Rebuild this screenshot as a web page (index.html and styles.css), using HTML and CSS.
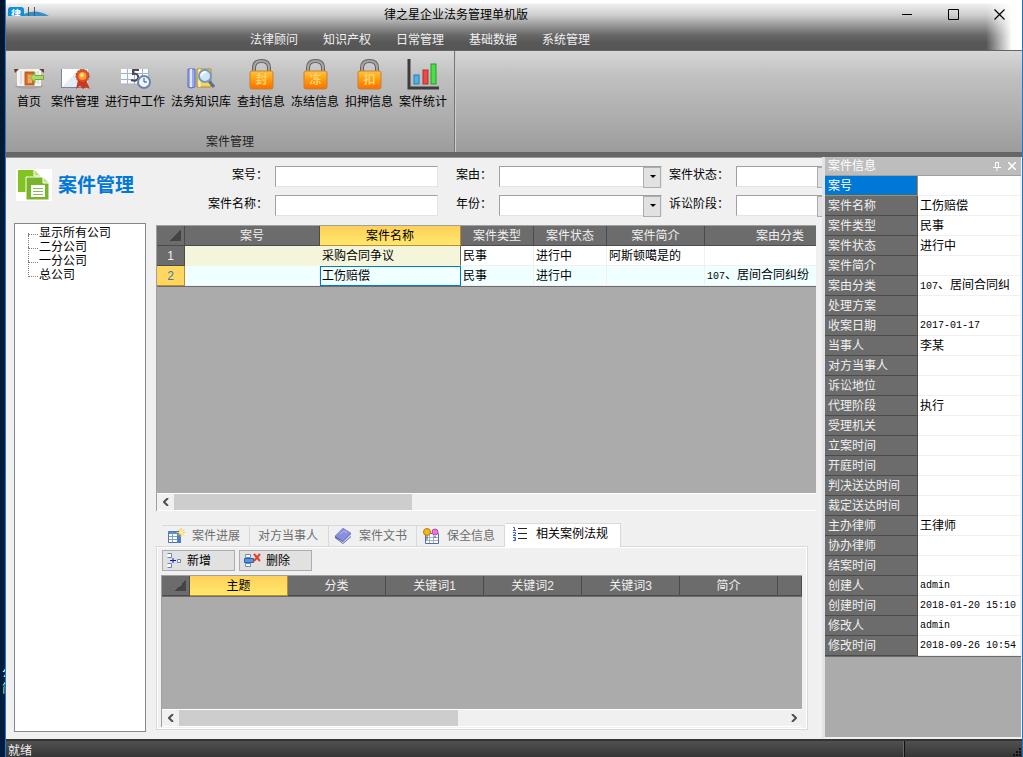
FILE: index.html
```
<!DOCTYPE html>
<html lang="zh-CN">
<head>
    <meta charset="UTF-8">
    <meta name="viewport" content="width=device-width, initial-scale=1.0">
    <title>律之星企业法务管理单机版</title>
    <link rel="stylesheet" href="styles.css">
</head>
<body>
    <div class="desktop">
        <span>公</span>
        <span class="green">简</span>
    </div>
    <div class="window">
        <header class="header">
            <div class="titlebar">
                <svg class="app-icon" width="42" height="9" viewBox="0 0 42 9">
                    <path d="M16 9V7Q28 1 41 9z" fill="#2f8fc8"/>
                    <path d="M20.500 0V9M26.500 0V9" stroke="#555"/>
                    <path d="M0 9V3Q0 0 3 0H13Q16 0 16 3V9z" fill="#0a8fe0"/>
                    <text x="3" y="11" font-size="10" font-weight="bold" fill="#fff">律</text>
                </svg>
                <h1 class="title">律之星企业法务管理单机版</h1>
                <div class="win-buttons">
                    <button type="button" aria-label="最小化"><svg width="11" height="11"><path d="M0 5.500H10" stroke="#000"/></svg></button>
                    <button type="button" aria-label="最大化"><svg width="11" height="11"><path d="M.5 .5H10.500V10.500H.5z" stroke="#000" fill="none"/></svg></button>
                    <button type="button" aria-label="关闭"><svg width="11" height="11"><path d="M.5 .5L10.500 10.500M10.500 .5L.5 10.500" stroke="#000" stroke-width="1.200"/></svg></button>
                </div>
            </div>
            <nav class="menu">
                <a href="#">法律顾问</a>
                <a href="#">知识产权</a>
                <a href="#">日常管理</a>
                <a href="#">基础数据</a>
                <a href="#">系统管理</a>
            </nav>
        </header>

        <section class="ribbon">
            <div class="ribbon-group">
                <div class="ribbon-items">
                    <button type="button" class="home">
                        <svg width="32" height="32" viewBox="0 0 32 32">
                            <ellipse cx="16" cy="28" rx="14" ry="3" fill="#999" opacity=".6"/>
                            <path d="M4 11H28V28H4z" fill="#f5f3f0"/>
                            <path d="M1 11H6L2 15zM26 11H31V15z" fill="#6b3a33"/>
                            <path d="M8 13V26M25 13V26" stroke="#ccc"/>
                            <path d="M12.500 14.500H20.500V26.500H12.500z" fill="#e87a3a" stroke="#c0601c" stroke-width="2"/>
                            <path d="M15 17H19V25H15z" fill="#f6a868"/>
                            <path d="M17 19.500L22 14.500V17.500H30.500V21.500H22V24.500z" fill="#a9dc67" stroke="#76a83a"/>
                        </svg>
                        <span>首页</span>
                    </button>
                    <button type="button">
                        <svg width="32" height="32" viewBox="0 0 32 32">
                            <path d="M2 11H29V29.500H2z" fill="#e4ebf5"/>
                            <path d="M2 29.500H29M2.500 11V29" stroke="#7387a3" fill="none"/>
                            <path d="M3 29V11H20z" fill="#fff"/>
                            <path d="M19 22L17 31L21 28L24 31V24zM27 22L31 31L27 29L24 31V24z" fill="#c93a20"/>
                            <circle cx="23.500" cy="18" r="6.500" fill="#dc4d2a" stroke="#b93218" stroke-dasharray="2 1"/>
                            <circle cx="23.500" cy="18" r="4" fill="#ff9a32"/>
                            <circle cx="23" cy="17" r="2" fill="#ffe27a"/>
                        </svg>
                        <span>案件管理</span>
                    </button>
                    <button type="button">
                        <svg width="32" height="32" viewBox="0 0 32 32">
                            <path d="M2 11H30V26H2z" fill="#fafcff"/>
                            <path d="M2 15.500H30M2 21.500H30M2 26H24M8.500 11V26M15.500 11V26M23.500 11V26M29.500 11V19" stroke="#a2b2c8"/>
                            <path d="M20 12H14V16Q20 15 19 20Q18 24 12 22" fill="none" stroke="#4a4a52" stroke-width="2"/>
                            <circle cx="25" cy="24" r="6" fill="#eef5fc" stroke="#6886a9" stroke-width="2"/>
                            <path d="M25 20V24H28" fill="none" stroke="#2b4a70"/>
                        </svg>
                        <span>进行中工作</span>
                    </button>
                    <button type="button">
                        <svg width="32" height="32" viewBox="0 0 32 32">
                            <path d="M3 11H10V29Q6 31 3 29z" fill="#98a9ef" stroke="#596dc2"/>
                            <path d="M6 11V29" stroke="#e2e8ff" stroke-width="2"/>
                            <path d="M12 11H26V29H12z" fill="#f4d266" stroke="#b28b25"/>
                            <path d="M14.500 11V29" stroke="#fff3ad" stroke-width="2"/>
                            <path d="M24 23L29 29" stroke="#59708f" stroke-width="3"/>
                            <circle cx="20" cy="18" r="6" fill="#cfe6f8" stroke="#7899bb" stroke-width="2"/>
                            <path d="M16 18Q17 14 21 14" fill="none" stroke="#fff" stroke-width="2"/>
                        </svg>
                        <span>法务知识库</span>
                    </button>
                    <button type="button">
                        <svg width="32" height="32" viewBox="0 0 32 32">
                            <defs>
                                <linearGradient id="orange" x1="0" y1="0" x2="0" y2="1">
                                    <stop offset="0" stop-color="#ffc43c"/>
                                    <stop offset=".5" stop-color="#ff9a0c"/>
                                    <stop offset="1" stop-color="#ff6d00"/>
                                </linearGradient>
                                <g id="lock">
                                    <path d="M9 13V10Q9 3 16.500 3T24 10V13" fill="none" stroke="#626262" stroke-width="4"/>
                                    <path d="M9 13V10Q9 3 16.500 3T24 10V13" fill="none" stroke="#a5a5a5" stroke-width="2"/>
                                    <rect x="5" y="13" width="23" height="18" rx="2" fill="url(#orange)" stroke="#c58137"/>
                                </g>
                            </defs>
                            <use href="#lock"/>
                            <text class="lock-text" x="16.500" y="26" text-anchor="middle">封</text>
                        </svg>
                        <span>查封信息</span>
                    </button>
                    <button type="button">
                        <svg width="32" height="32" viewBox="0 0 32 32">
                            <use href="#lock"/>
                            <text class="lock-text" x="16.500" y="26" text-anchor="middle">冻</text>
                        </svg>
                        <span>冻结信息</span>
                    </button>
                    <button type="button">
                        <svg width="32" height="32" viewBox="0 0 32 32">
                            <use href="#lock"/>
                            <text class="lock-text" x="16.500" y="26" text-anchor="middle">扣</text>
                        </svg>
                        <span>扣押信息</span>
                    </button>
                    <button type="button">
                        <svg width="32" height="32" viewBox="0 0 32 32">
                            <path d="M2 1V30H32" fill="none" stroke="#3c3c3c" stroke-width="3"/>
                            <rect x="7" y="17" width="5" height="9" fill="#4eb2ea" stroke="#287aad"/>
                            <rect x="16" y="12" width="5" height="14" fill="#ed4b48" stroke="#a93335"/>
                            <rect x="24" y="6" width="5" height="20" fill="#4be044" stroke="#29992b"/>
                        </svg>
                        <span>案件统计</span>
                    </button>
                </div>
                <div class="ribbon-caption">案件管理</div>
            </div>
        </section>

        <div class="content">
            <main class="main">
                <aside class="sidebar">
                    <div class="page-head">
                        <svg width="36" height="32" viewBox="0 0 36 32">
                            <path d="M0 0H36V32H0z" fill="#fff"/>
                            <path d="M2 1H18L24 7V23H2z" fill="#83c31f"/>
                            <path d="M18 1V7H24" fill="#b9e36b" stroke="#fff"/>
                            <path d="M10 8H27L33 14V31H10z" fill="#79b52a" stroke="#fff"/>
                            <path d="M27 8V14H33" fill="#bde585" stroke="#fff"/>
                            <path d="M15 16H29V28H15z" fill="#fff"/>
                            <path d="M17 19.500H27M17 22.500H27M17 25.500H27" stroke="#8bb75e"/>
                        </svg>
                        <h2>案件管理</h2>
                    </div>
                    <ul class="tree">
                        <li>显示所有公司</li>
                        <li>二分公司</li>
                        <li>一分公司</li>
                        <li>总公司</li>
                    </ul>
                </aside>

                <div class="work">
                    <form class="filters">
                        <label for="caseNo">案号：</label>
                        <input type="text" id="caseNo">
                        <label for="cause">案由：</label>
                        <div class="combo"><select id="cause"><option></option></select></div>
                        <label for="status">案件状态：</label>
                        <div class="combo"><select id="status"><option></option></select></div>
                        <label for="caseName">案件名称：</label>
                        <input type="text" id="caseName">
                        <label for="year">年份：</label>
                        <div class="combo"><select id="year"><option></option></select></div>
                        <label for="stage">诉讼阶段：</label>
                        <div class="combo"><select id="stage"><option></option></select></div>
                    </form>

                    <div class="grid">
                        <div class="grid-body">
                            <table class="cases">
                                <colgroup>
                                    <col class="w-head"><col class="w-no"><col class="w-name"><col class="w-type"><col class="w-type"><col class="w-brief"><col class="w-cause">
                                </colgroup>
                                <thead>
                                    <tr>
                                        <th class="corner"></th>
                                        <th>案号</th>
                                        <th class="current">案件名称</th>
                                        <th>案件类型</th>
                                        <th>案件状态</th>
                                        <th>案件简介</th>
                                        <th>案由分类</th>
                                    </tr>
                                </thead>
                                <tbody>
                                    <tr>
                                        <th scope="row">1</th>
                                        <td class="frozen"></td>
                                        <td class="frozen last">采购合同争议</td>
                                        <td>民事</td>
                                        <td>进行中</td>
                                        <td>阿斯顿噶是的</td>
                                        <td></td>
                                    </tr>
                                    <tr class="selected">
                                        <th scope="row">2</th>
                                        <td></td>
                                        <td class="focus">工伤赔偿</td>
                                        <td>民事</td>
                                        <td>进行中</td>
                                        <td></td>
                                        <td><span class="mono">107</span>、居间合同纠纷</td>
                                    </tr>
                                </tbody>
                            </table>
                        </div>
                        <div class="scrollbar">
                            <button type="button" aria-label="向左"><svg width="6" height="8"><path d="M5 0L1 4L5 8" fill="none" stroke="#505050" stroke-width="2"/></svg></button>
                            <div class="track"><div class="thumb" style="width: 37%"></div></div>
                        </div>
                    </div>

                    <div class="tabs" role="tablist">
                        <button type="button" role="tab">
                            <svg width="17" height="16" viewBox="0 0 17 16">
                                <path d="M.5 3.500H12.500V14.500H.5z" fill="#fff" stroke="#4f74b5"/>
                                <path d="M.5 4H12V6H.5z" fill="#5d87c8"/>
                                <path d="M4.500 4V14M1 8.500H12M1 11.500H12" stroke="#7f9fd0"/>
                                <path d="M9 6H13V15H9z" fill="#4c7fd0"/>
                                <path d="M13 0V9M8.500 4.500H17M10 1.500L16 7.500M16 1.500L10 7.500" stroke="#f5c431"/>
                                <circle cx="13" cy="4.500" r="2" fill="#fff39a"/>
                            </svg>案件进展
                        </button>
                        <button type="button" role="tab" class="plain">对方当事人</button>
                        <button type="button" role="tab">
                            <svg width="17" height="16" viewBox="0 0 17 16">
                                <path d="M0 8L8 0L16 5V9L8 16L0 10z" fill="#5960a8"/>
                                <path d="M1 10L8 14L16 6V8L8 15z" fill="#e6e8f8"/>
                                <path d="M0 8L8 0L16 5L8 13z" fill="#888fdc"/>
                                <path d="M5 6L9 3L12 5" fill="none" stroke="#b8bdf2"/>
                            </svg>案件文书
                        </button>
                        <button type="button" role="tab">
                            <svg width="17" height="16" viewBox="0 0 17 16">
                                <path d="M2.500 5.500H15.500V15.500H2.500z" fill="#fff" stroke="#4e6fae"/>
                                <path d="M3 9.500H15M3 12.500H15M6.500 7V15M10.500 7V15" stroke="#9fb1d5"/>
                                <circle cx="4" cy="4" r="3.500" fill="#f5b51c" stroke="#b77a08"/>
                                <circle cx="12" cy="4" r="3" fill="#e875dc" stroke="#b949b0"/>
                                <path d="M4 8V12M12 8V10" stroke="#555"/>
                            </svg>保全信息
                        </button>
                        <button type="button" role="tab" class="active" aria-selected="true">
                            <svg width="17" height="16" viewBox="0 0 17 16">
                                <path d="M6 2.500H15M6 7.500H15M6 12.500H15" stroke="#222"/>
                                <path d="M1 1.500H2.500V4M1 4.500H4M1 6.500H3.500V8L1 9.500H4M1 11.500H3.500V14.500H1M2 13H3.500" fill="none" stroke="#3f66bd"/>
                            </svg>相关案例法规
                        </button>
                    </div>
                    <section class="pane">
                        <div class="toolbar">
                            <button type="button">
                                <svg width="15" height="15" viewBox="0 0 15 15">
                                    <path d="M.5 .5H4.500V4.500H.5M.5 10.500H4.500V14.500H.5M10.500 6.500H13.500V9.500H10.500z" fill="#fff" stroke="#6486b2"/>
                                    <path d="M3 7.500H9M6 5V10" stroke="#1515d0"/>
                                </svg>新增
                            </button>
                            <button type="button">
                                <svg width="17" height="15" viewBox="0 0 17 15">
                                    <path d="M1.500 1.500H6.500V4.500H1.500zM1.500 10.500H6.500V13.500H1.500z" fill="#fff" stroke="#6d8db8"/>
                                    <path d="M.5 5.500H9.500V9.500H.5z" fill="#5a95e2" stroke="#3061a4"/>
                                    <path d="M10 1L16 8M16 1L10 8" stroke="#ec3d23" stroke-width="2"/>
                                </svg>删除
                            </button>
                        </div>
                        <div class="grid laws">
                            <div class="grid-body">
                                <table>
                                    <colgroup>
                                        <col class="w-head"><col class="w-law"><col class="w-law"><col class="w-law"><col class="w-law"><col class="w-law"><col class="w-law"><col>
                                    </colgroup>
                                    <thead>
                                        <tr>
                                            <th class="corner"></th>
                                            <th class="current">主题</th>
                                            <th>分类</th>
                                            <th>关键词1</th>
                                            <th>关键词2</th>
                                            <th>关键词3</th>
                                            <th>简介</th>
                                            <th></th>
                                        </tr>
                                    </thead>
                                </table>
                            </div>
                            <div class="scrollbar">
                                <button type="button" aria-label="向左"><svg width="6" height="8"><path d="M5 0L1 4L5 8" fill="none" stroke="#505050" stroke-width="2"/></svg></button>
                                <div class="track"><div class="thumb" style="width: 46%"></div></div>
                                <button type="button" aria-label="向右"><svg width="6" height="8"><path d="M1 0L5 4L1 8" fill="none" stroke="#505050" stroke-width="2"/></svg></button>
                            </div>
                        </div>
                    </section>
                </div>
            </main>

            <aside class="info">
                <div class="info-head">
                    <h2>案件信息</h2>
                    <button type="button" aria-label="固定"><svg width="8" height="9"><path d="M2.500 5V.5H5.500V5M5.500 0V5M0 5.500H8M4 6V9" fill="none" stroke="#fff"/></svg></button>
                    <button type="button" aria-label="关闭"><svg width="8" height="8"><path d="M0 0L8 8M8 0L0 8" stroke="#fff" stroke-width="1.500"/></svg></button>
                </div>
                <table class="props">
                    <tr class="active"><th scope="row">案号</th><td></td></tr>
                    <tr><th scope="row">案件名称</th><td>工伤赔偿</td></tr>
                    <tr><th scope="row">案件类型</th><td>民事</td></tr>
                    <tr><th scope="row">案件状态</th><td>进行中</td></tr>
                    <tr><th scope="row">案件简介</th><td></td></tr>
                    <tr><th scope="row">案由分类</th><td><span class="mono">107</span>、居间合同纠</td></tr>
                    <tr><th scope="row">处理方案</th><td></td></tr>
                    <tr><th scope="row">收案日期</th><td class="mono">2017-01-17</td></tr>
                    <tr><th scope="row">当事人</th><td>李某</td></tr>
                    <tr><th scope="row">对方当事人</th><td></td></tr>
                    <tr><th scope="row">诉讼地位</th><td></td></tr>
                    <tr><th scope="row">代理阶段</th><td>执行</td></tr>
                    <tr><th scope="row">受理机关</th><td></td></tr>
                    <tr><th scope="row">立案时间</th><td></td></tr>
                    <tr><th scope="row">开庭时间</th><td></td></tr>
                    <tr><th scope="row">判决送达时间</th><td></td></tr>
                    <tr><th scope="row">裁定送达时间</th><td></td></tr>
                    <tr><th scope="row">主办律师</th><td>王律师</td></tr>
                    <tr><th scope="row">协办律师</th><td></td></tr>
                    <tr><th scope="row">结案时间</th><td></td></tr>
                    <tr><th scope="row">创建人</th><td class="mono">admin</td></tr>
                    <tr><th scope="row">创建时间</th><td class="mono">2018-01-20 15:10</td></tr>
                    <tr><th scope="row">修改人</th><td class="mono">admin</td></tr>
                    <tr><th scope="row">修改时间</th><td class="mono">2018-09-26 10:54</td></tr>
                </table>
            </aside>
        </div>

        <footer class="statusbar">
            <span>就绪</span>
            <div class="status-end">
                <svg width="9" height="9"><path d="M6 0H8V2H6zM3 3H5V5H3zM6 3H8V5H6zM0 6H2V8H0zM3 6H5V8H3zM6 6H8V8H6z" fill="#111"/></svg>
            </div>
        </footer>
    </div>
</body>
</html>
```
FILE: styles.css
```
* {
    box-sizing: border-box;
}
body {
    margin: 0;
    height: 100vh;
    display: flex;
    overflow: hidden;
    font: 12px/16px "Liberation Sans", "Noto Sans CJK SC", sans-serif;
    color: #000;
    background: #021b38;
}
h1, h2, ul {
    margin: 0;
    padding: 0;
    font-size: 12px;
    font-weight: normal;
}
button, input, select {
    font: inherit;
    color: inherit;
    margin: 0;
    padding: 0;
    border: 0;
    border-radius: 0;
    background: none;
}
svg {
    display: block;
    flex: none;
}
.mono {
    font-family: "Liberation Mono", monospace;
    font-size: 10px;
}

/* desktop strip left of the window */
.desktop {
    width: 5px;
    flex: none;
    overflow: hidden;
    display: flex;
    flex-direction: column;
    justify-content: flex-end;
    padding: 0 0 60px 2px;
    color: #fff;
    background: linear-gradient(#04152b, #021b38 30%, #001c3c);
}
.desktop .green {
    color: #b9f5a0;
}
.window {
    flex: 1;
    min-width: 0;
    display: flex;
    flex-direction: column;
    border: solid #1979ca;
    border-width: 0 1px;
    background: #f0f0f0;
}

/* title and menu */
.header {
    height: 51px;
    flex: none;
    border-bottom: 1px solid #666;
    background:
        linear-gradient(90deg, rgba(255,255,255,0) calc(100% - 36px), #fff calc(100% - 10px)),
        linear-gradient(#fff 3px, #efefef 4px, #cecece 15px, #959595 26px, #686868 35px, #575757 43px, #565656);
}
.titlebar {
    display: flex;
    height: 29px;
    align-items: center;
}
.app-icon {
    margin-left: 2px;
    align-self: flex-start;
    margin-top: 7px;
}
.title {
    flex: 1;
    padding-left: 334px;
}
.win-buttons {
    display: flex;
}
.win-buttons button {
    width: 46px;
    height: 28px;
    display: flex;
    align-items: center;
    justify-content: center;
}
.menu {
    display: flex;
    gap: 25px;
    padding: 3px 0 0 244px;
}
.menu a {
    color: #f0f0f0;
    text-decoration: none;
}

/* ribbon */
.ribbon {
    display: flex;
    flex: none;
    border-bottom: 5px solid #666;
    background: linear-gradient(#d7d7d7, #c0c0c0 25%, #ababab 70%, #9c9c9c);
}
.ribbon-group {
    display: flex;
    flex-direction: column;
    padding: 7px 7px 2px;
    border-right: 1px solid #777;
    box-shadow: 1px 0 #ccc;
}
.ribbon-items {
    display: flex;
    gap: 6px;
}
.ribbon-items button {
    display: flex;
    flex-direction: column;
    align-items: center;
    gap: 4px;
}
.ribbon-items .home {
    width: 32px;
}
.lock-text {
    font-size: 12px;
    font-weight: bold;
    fill: #ffd36a;
}
.ribbon-caption {
    margin-top: 24px;
    text-align: center;
    color: #222;
}

/* main area */
.content {
    flex: 1;
    min-height: 0;
    display: flex;
}
.main {
    flex: 1;
    min-width: 0;
    display: flex;
    gap: 10px;
    padding: 0 0 0 8px;
    overflow: hidden;
    border-top: 1px solid #999;
}
.sidebar {
    width: 132px;
    flex: none;
    display: flex;
    flex-direction: column;
    padding-bottom: 7px;
}
.page-head {
    display: flex;
    align-items: center;
    gap: 6px;
    height: 65px;
    padding: 0 0 12px 2px;
}
.page-head h2 {
    padding-top: 2px;
    font-size: 19px;
    line-height: 24px;
    font-weight: bold;
    color: #0078d7;
    white-space: nowrap;
}
.tree {
    flex: 1;
    padding: 2px 0 0 13px;
    list-style: none;
    border: 1px solid #828790;
    background: #fff;
}
.tree li {
    position: relative;
    padding-left: 11px;
    line-height: 14px;
}
.tree li::before {
    content: "";
    position: absolute;
    left: 0;
    top: -7px;
    width: 9px;
    height: 15px;
    border: dotted #808080;
    border-width: 0 0 1px 1px;
}
.tree li:first-child::before {
    top: 7px;
    height: 1px;
}
.work {
    flex: 1;
    min-width: 0;
    display: flex;
    flex-direction: column;
    padding-bottom: 9px;
}
.filters {
    display: grid;
    grid-template-columns: 112px 163px 47px 163px 60px 100px;
    gap: 8px 7px;
    padding: 8px 0 9px;
}
.filters label {
    line-height: 18px;
    text-align: right;
    white-space: nowrap;
}
.filters input, .combo {
    height: 21px;
    border: 1px solid;
    border-color: #a0a0a0 #e3e3e3 #e3e3e3 #a0a0a0;
    background: #fff;
}
.combo {
    position: relative;
}
.combo select {
    appearance: none;
    display: block;
    width: 100%;
    height: 19px;
}
.combo::before {
    content: "";
    position: absolute;
    right: 0;
    top: 0;
    width: 16px;
    height: 19px;
    border: 1px solid #adadad;
    background: #e1e1e1;
    pointer-events: none;
}
.combo::after {
    content: "";
    position: absolute;
    right: 5px;
    top: 8px;
    border: solid transparent;
    border-width: 3px 3px 0;
    border-top-color: #000;
    pointer-events: none;
}

/* data grids */
.grid {
    flex: 1;
    min-height: 0;
    display: flex;
    flex-direction: column;
    margin-right: 6px;
    border: solid #a0a0a0;
    border-width: 1px 0 0 1px;
}
.grid-body {
    flex: 1;
    min-height: 0;
    overflow: hidden;
    background: #ababab;
}
table {
    width: 100%;
    table-layout: fixed;
    border-collapse: separate;
    border-spacing: 0;
}
.grid table {
    border-bottom: 1px solid #6c6c6c;
}
table.cases {
    width: 699px;
}
.w-head { width: 28px; }
.w-no { width: 135px; }
.w-name { width: 141px; }
.w-type { width: 73px; }
.w-brief { width: 98px; }
.w-cause { width: 151px; }
.w-law { width: 98px; }
th, td {
    height: 20px;
    padding: 0 2px;
    white-space: nowrap;
    overflow: hidden;
    font-weight: normal;
    line-height: 16px;
}
th {
    color: #f0f0f0;
    background: #6c6c6c;
    border: solid #4b4b4b;
    border-width: 0 1px 1px 0;
}
td {
    text-align: left;
    background: #fff;
    border: solid #f0f0f0;
    border-width: 0 1px 1px 0;
}
th.current {
    color: #000;
    background: linear-gradient(#ffd05a, #ffe86c);
    border-color: #c28a30;
}
.corner {
    background: linear-gradient(135deg, transparent 50%, #444 50%) right 3px bottom 4px / 11px 11px no-repeat #6c6c6c;
}
.cases td.frozen {
    background: #f5f5dc;
    border-color: #f5f5dc;
}
.cases td.last {
    border-right-color: #666;
}
.selected td {
    background: #f0ffff;
}
.selected th {
    color: #3c78b4;
    background: #ffd75f;
    border-color: #c28a30;
}
.cases td.focus {
    border: 1px solid #0078d7;
    padding-left: 1px;
}
.scrollbar {
    display: flex;
    height: 18px;
    flex: none;
    border: solid #fff;
    border-width: 1px 0;
}
.scrollbar button {
    width: 17px;
    display: flex;
    align-items: center;
    justify-content: center;
}
.track {
    flex: 1;
}
.thumb {
    height: 100%;
    background: #cdcdcd;
}

/* tabs */
.tabs {
    display: flex;
    align-items: flex-end;
    padding: 12px 0 0 6px;
}
.tabs button {
    display: flex;
    align-items: center;
    gap: 7px;
    height: 21px;
    padding: 0 9px 0 6px;
    color: #6d6d6d;
    border: solid #d9d9d9;
    border-width: 1px 1px 0 0;
}
.tabs .plain {
    padding: 0 10px 0 8px;
}
.tabs .active {
    height: 24px;
    margin-bottom: -1px;
    padding: 0 12px 3px 7px;
    color: #000;
    background: #fff;
    z-index: 1;
}
.pane {
    margin-right: 14px;
    padding: 3px 5px 2px 4px;
    border: 1px solid #d9d9d9;
    box-shadow: inset 0 0 0 1px #fff;
}
.toolbar {
    display: flex;
    gap: 4px;
    padding: 0 0 4px 1px;
}
.toolbar button {
    width: 73px;
    height: 21px;
    display: flex;
    align-items: center;
    gap: 5px;
    padding: 0 4px;
    border: 1px solid #adadad;
    background: #e1e1e1;
}
.laws {
    margin-right: 0;
    min-height: 152px;
}

/* right panel */
.info {
    width: 200px;
    flex: none;
    border-left: 3px solid #e2e2e8;
    border-right: 1px solid #f0f0f0;
    background: #ababab;
    border-bottom: 2px solid #f0f0f0;
}
.info-head {
    display: flex;
    align-items: center;
    gap: 7px;
    height: 19px;
    padding: 0 5px 0 3px;
    color: #fff;
    background: #bdbdbd;
    border-bottom: 1px solid #a0a0a0;
}
.info-head h2 {
    flex: 1;
}
.props {
    border-bottom: 1px solid #6c6c6c;
}
.props th {
    width: 93px;
    text-align: left;
    padding-left: 3px;
}
.props .active th {
    color: #fff;
    background: #0078d7;
    border-color: #c28a30;
}

.statusbar {
    display: flex;
    height: 18px;
    flex: none;
    overflow: hidden;
    padding-left: 2px;
    color: #f0f0f0;
    border-top: 2px solid #333;
    background: linear-gradient(#505050, #363636);
}
.statusbar span {
    flex: 1;
    padding-top: 2px;
}
.status-end {
    width: 118px;
    display: flex;
    justify-content: flex-end;
    align-items: flex-end;
    border-left: 1px solid #111;
    box-shadow: -1px 0 #666;
}
```
